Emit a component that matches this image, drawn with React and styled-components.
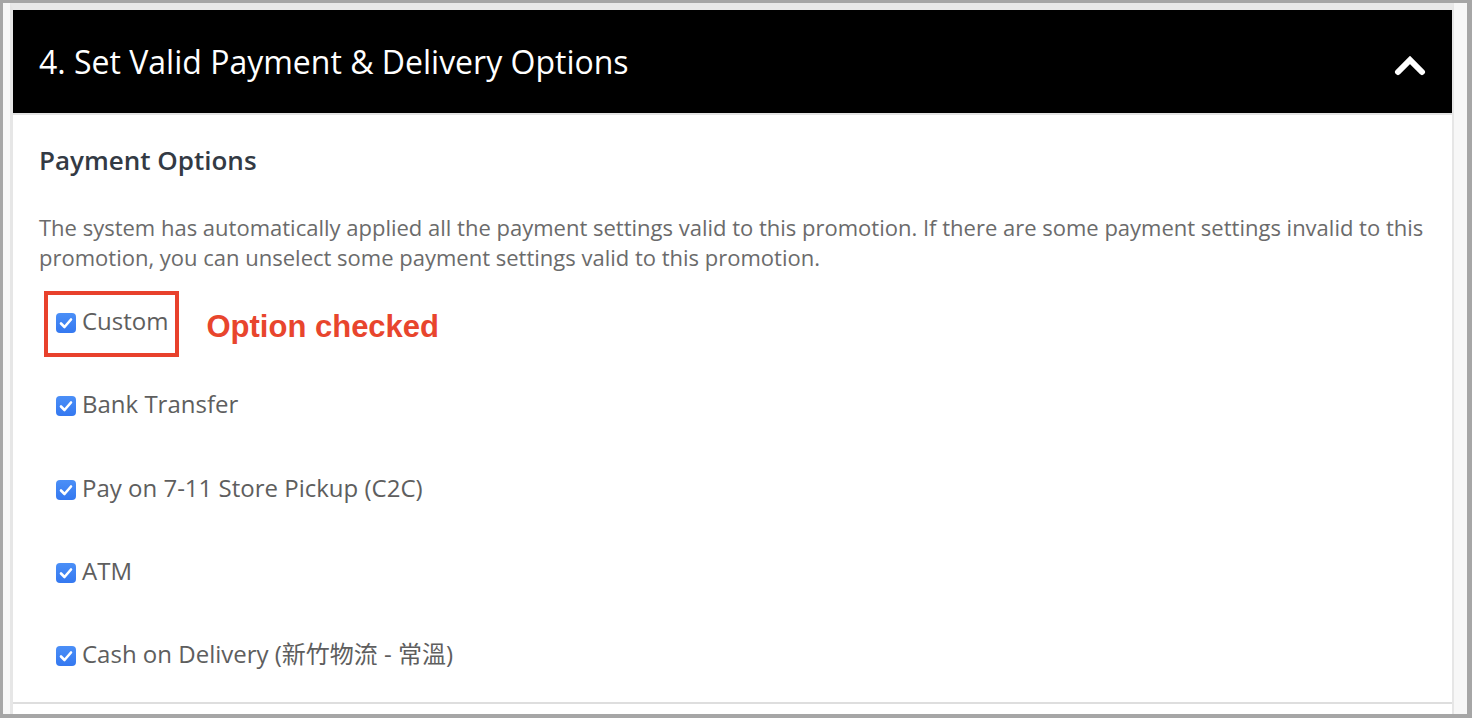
import React from 'react';
import styled, { createGlobalStyle, css } from 'styled-components';

const GlobalStyle = createGlobalStyle`
  html, body {
    margin: 0;
    padding: 0;
    background: #f7f7f7;
  }
  * {
    box-sizing: border-box;
  }
`

const Frame = styled.div`
  width: 1472px;
  height: 718px;
  border: 3px solid #a6a6a6;
  border-right-width: 5px;
  border-bottom-width: 4px;
  background: #f7f7f7;
  padding: 0 13px 0 7px;
  display: flex;
  overflow: hidden;
`

const Panel = styled.section`
  flex: 1;
  display: flex;
  flex-direction: column;
  background: #ffffff;
  border-top: 7px solid #e9e9e9;
  border-left: 3px solid #e6e6e6;
  border-right: 2px solid #e6e6e6;
`

const Header = styled.header`
  height: 105px;
  flex-shrink: 0;
  background: #000000;
  border-bottom: 2px solid #e3e3e3;
  display: flex;
  align-items: center;
  justify-content: space-between;
  padding: 0 26px 0 26px;
`

const HeaderTitle = styled.h2`
  margin: 0;
  color: #ffffff;
  font-family: "Open Sans", "Noto Sans", sans-serif;
  font-weight: 400;
  font-size: 32px;
  line-height: 40px;
`

const Toggle = styled.span`
  display: flex;
  margin-top: 7px;
`

const Body = styled.div`
  flex: 1;
  padding: 30px 28px 0 26px;
  border-bottom: 2px solid #dedede;
  margin-bottom: 10px;
`

const SectionTitle = styled.h3`
  margin: 0;
  font-family: "Open Sans", "Noto Sans", sans-serif;
  font-weight: 600;
  font-size: 26px;
  line-height: 30px;
  color: #333a44;
`

const Description = styled.p`
  margin: 37px 0 0;
  font-family: "Open Sans", "Noto Sans", sans-serif;
  font-size: 22px;
  line-height: 30px;
  color: #6b6b6b;
`

const OptionList = styled.div`
  display: flex;
  flex-direction: column;
  gap: 53.3px;
  margin-top: 34px;
  padding-left: 17px;
`

const OptionRow = styled.div`
  display: flex;
  align-items: center;
  gap: 38px;
  height: 30px;
`

const Highlight = styled.div`
  ${props => props.active && css`
    margin: -15px -11px -21px -12px;
    padding: 11px 7px 17px 8px;
    border: 4px solid #e8412c;
  `}
`

const Option = styled.label`
  display: flex;
  align-items: center;
  gap: 6px;
  font-family: "Open Sans", "Noto Sans CJK TC", sans-serif;
  font-size: 24px;
  line-height: 30px;
  color: #5e5e5e;
`

const Box = styled.span`
  width: 20px;
  height: 20px;
  margin-top: 4px;
  flex-shrink: 0;
  border-radius: 4px;
  background: linear-gradient(#4b8ff7, #3478f0);
  display: flex;
  align-items: center;
  justify-content: center;
`

const Note = styled.span`
  font-family: "Liberation Sans", Arial, sans-serif;
  font-weight: 700;
  font-size: 31px;
  color: #e8452d;
  margin-top: 12px;
`

function Checkbox() {
  return (
    <Box>
      <svg width="14" height="12" viewBox="0 0 14 12">
        <polyline points="2,6.5 5.5,10 12,2.5" fill="none" stroke="#ffffff" strokeWidth="2.6" strokeLinecap="round" strokeLinejoin="round" />
      </svg>
    </Box>
  )
}

function ChevronUp() {
  return (
    <Toggle>
      <svg width="32" height="22" viewBox="0 0 32 22">
        <polyline points="4,18 16,6 28,18" fill="none" stroke="#ffffff" strokeWidth="6" strokeLinecap="round" strokeLinejoin="miter" />
      </svg>
    </Toggle>
  )
}

const options = [
  'Custom',
  'Bank Transfer',
  'Pay on 7-11 Store Pickup (C2C)',
  'ATM',
  'Cash on Delivery (新竹物流 - 常溫)',
]

export default function App() {
  return (
    <Frame>
      <GlobalStyle />
      <Panel>
        <Header>
          <HeaderTitle>4. Set Valid Payment &amp; Delivery Options</HeaderTitle>
          <ChevronUp />
        </Header>
        <Body>
          <SectionTitle>Payment Options</SectionTitle>
          <Description>
            The system has automatically applied all the payment settings valid to this promotion. If there are some payment settings invalid to this promotion, you can unselect some payment settings valid to this promotion.
          </Description>
          <OptionList>
            {options.map((name, i) => (
              <OptionRow key={name}>
                <Highlight active={i === 0}>
                  <Option>
                    <Checkbox />
                    {name}
                  </Option>
                </Highlight>
                {i === 0 && <Note>Option checked</Note>}
              </OptionRow>
            ))}
          </OptionList>
        </Body>
      </Panel>
    </Frame>
  )
}
